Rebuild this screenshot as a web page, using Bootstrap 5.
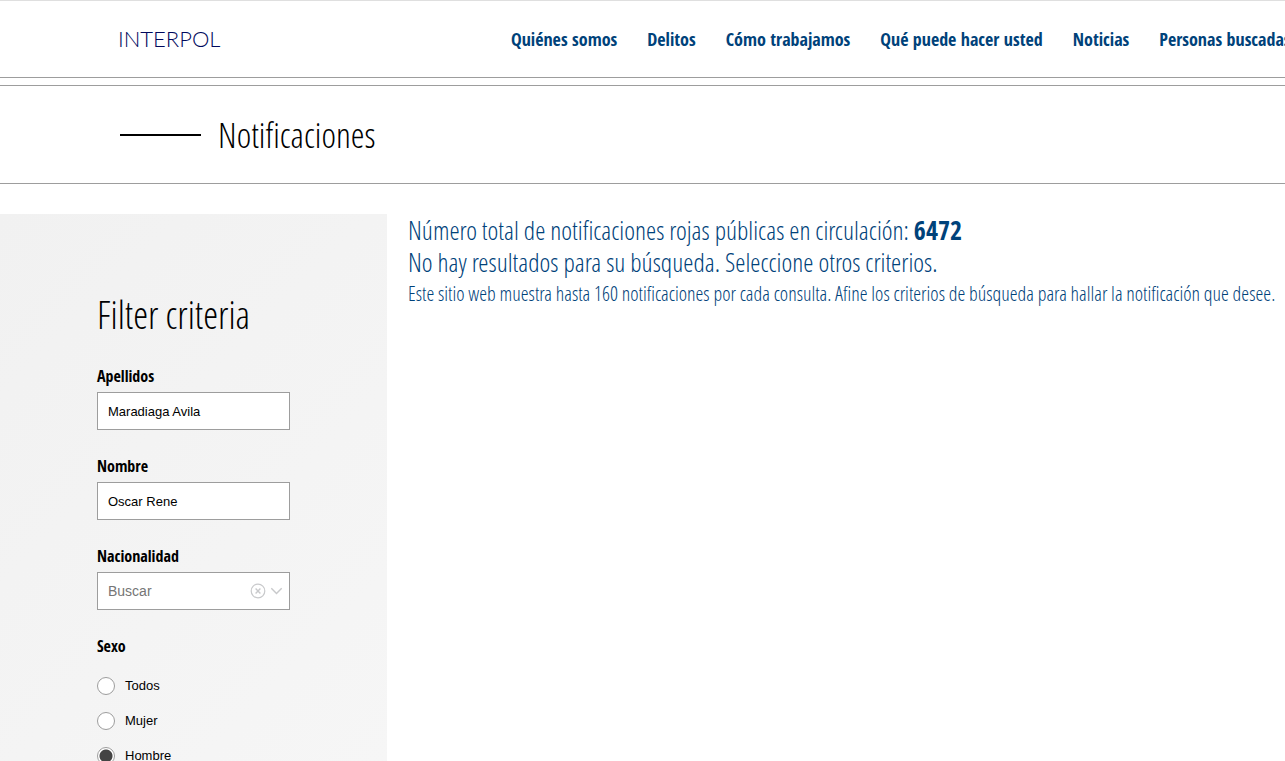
<!DOCTYPE html>
<html lang="es">
<head>
<meta charset="utf-8">
<meta name="viewport" content="width=device-width, initial-scale=1">
<title>Notificaciones - INTERPOL</title>
<link rel="stylesheet" href="https://cdn.jsdelivr.net/npm/bootstrap@5.3.0/dist/css/bootstrap.min.css">
<style>
  :root { --navy: #00427a; --rule: #9d9d9d; }
  body { font-family: "Liberation Sans", Arial, sans-serif; color: #000; background: #fff; overflow-x: hidden; }
  .cond-bold { font-family: "Open Sans Condensed", "Open Sans", sans-serif; font-weight: 700; }
  .cond-light { font-family: "Open Sans Condensed Light", "Open Sans", sans-serif; font-weight: 300; }

  .site-header { border-top: 1px solid #dfdfdf; border-bottom: 1px solid var(--rule); height: 78px; padding-left: 118px; overflow: hidden; }
  .brand { width: 103px; font-family: Lato, sans-serif; font-weight: 300; font-size: 22px; line-height: 24px; color: #00085c; }
  .main-nav { gap: 30px; margin-left: 290px; font-size: 18px; line-height: 24px; }
  .main-nav a { color: var(--navy); }

  .title-bar { margin-top: 7px; border-top: 1px solid var(--rule); border-bottom: 1px solid var(--rule); height: 99px; padding-left: 120px; gap: 17px; }
  .title-dash { width: 81px; height: 2px; background: #000; }
  .title-bar h1 { font-size: 35px; line-height: 48px; }

  .content-row { margin-top: 30px; gap: 21px; }
  .filters { flex: 0 0 387px; min-height: 547px; padding: 76px 97px 0; background: linear-gradient(135deg, #f1f1f1, #f6f6f6); }
  .filters h2 { font-size: 38px; line-height: 48px; margin-bottom: 26px; }
  .field { margin-bottom: 24px; }
  .field-label { font-size: 16px; line-height: 24px; margin-bottom: 4px; }
  .field .form-control { height: 38px; padding: 0 10px; border: 1px solid var(--rule); border-radius: 0; font-size: 13px; color: #000; background: #fff; }
  .field .form-control.picker { font-size: 14px; padding-right: 44px; }
  .picker::placeholder { color: #757575; opacity: 1; }
  .picker-icons { right: 7px; gap: 4px; color: #c8c9cb; }
  .picker-icons button { line-height: 0; color: inherit; }

  .choices { gap: 17px; margin-top: 15px; }
  .choices .choice { gap: 10px; font-size: 13px; line-height: 18px; }
  .choice .form-check-input { width: 18px; height: 18px; border: 1px solid var(--rule); background-color: #fff; }
  .choice .form-check-input:checked { border-color: var(--rule); background-image: radial-gradient(circle, #444 6px, #fff 7px); }

  .results { color: var(--navy); }
  .results .count-line { font-size: 26px; line-height: 32px; }
  .results .hint-line { font-size: 20px; line-height: 32px; }
</style>
</head>
<body>
<header class="site-header d-flex align-items-center">
  <a href="#" class="brand text-decoration-none flex-shrink-0">INTERPOL</a>
  <nav class="main-nav cond-bold d-flex flex-nowrap text-nowrap" aria-label="Principal">
    <a class="text-decoration-none" href="#">Quiénes somos</a>
    <a class="text-decoration-none" href="#">Delitos</a>
    <a class="text-decoration-none" href="#">Cómo trabajamos</a>
    <a class="text-decoration-none" href="#">Qué puede hacer usted</a>
    <a class="text-decoration-none" href="#">Noticias</a>
    <a class="text-decoration-none" href="#">Personas buscadas</a>
  </nav>
</header>

<section class="title-bar d-flex align-items-center">
  <span class="title-dash"></span>
  <h1 class="cond-light mb-0">Notificaciones</h1>
</section>

<main class="content-row d-flex">
  <form class="filters">
    <h2 class="cond-light text-nowrap">Filter criteria</h2>
    <div class="field">
      <label class="field-label cond-bold d-block" for="surname">Apellidos</label>
      <input class="form-control" id="surname" type="text" value="Maradiaga Avila">
    </div>
    <div class="field">
      <label class="field-label cond-bold d-block" for="forename">Nombre</label>
      <input class="form-control" id="forename" type="text" value="Oscar Rene">
    </div>
    <div class="field">
      <label class="field-label cond-bold d-block" for="nationality">Nacionalidad</label>
      <div class="position-relative d-flex align-items-center">
        <input class="form-control picker" id="nationality" type="text" placeholder="Buscar">
        <div class="picker-icons position-absolute d-flex align-items-center">
          <button type="button" class="border-0 bg-transparent p-0" aria-label="Borrar">
            <svg width="16" height="16" viewBox="0 0 16 16" fill="none" stroke="currentColor"><circle cx="8" cy="8" r="6.8" stroke-width="1.2"/><path d="M5.6 5.6l4.8 4.8M10.4 5.6l-4.8 4.8" stroke-width="1.4"/></svg>
          </button>
          <button type="button" class="border-0 bg-transparent p-0" aria-label="Abrir">
            <svg width="13" height="16" viewBox="0 0 13 16" fill="none" stroke="currentColor" stroke-width="1.4"><path d="M1.3 5.2l5.2 5.4 5.2-5.4"/></svg>
          </button>
        </div>
      </div>
    </div>
    <fieldset>
      <legend class="field-label cond-bold float-none">Sexo</legend>
      <div class="choices d-flex flex-column">
        <div class="choice d-flex align-items-center"><input class="form-check-input m-0" type="radio" name="sex" id="sexAll"><label for="sexAll">Todos</label></div>
        <div class="choice d-flex align-items-center"><input class="form-check-input m-0" type="radio" name="sex" id="sexFemale"><label for="sexFemale">Mujer</label></div>
        <div class="choice d-flex align-items-center"><input class="form-check-input m-0" type="radio" name="sex" id="sexMale" checked><label for="sexMale">Hombre</label></div>
      </div>
    </fieldset>
  </form>

  <section class="results cond-light flex-fill">
    <p class="count-line mb-0">Número total de notificaciones rojas públicas en circulación: <strong class="cond-bold">6472</strong></p>
    <p class="count-line mb-0">No hay resultados para su búsqueda. Seleccione otros criterios.</p>
    <p class="hint-line mb-0">Este sitio web muestra hasta 160 notificaciones por cada consulta. Afine los criterios de búsqueda para hallar la notificación que desee.</p>
  </section>
</main>
<script src="https://cdn.jsdelivr.net/npm/bootstrap@5.3.0/dist/js/bootstrap.bundle.min.js"></script>
</body>
</html>
